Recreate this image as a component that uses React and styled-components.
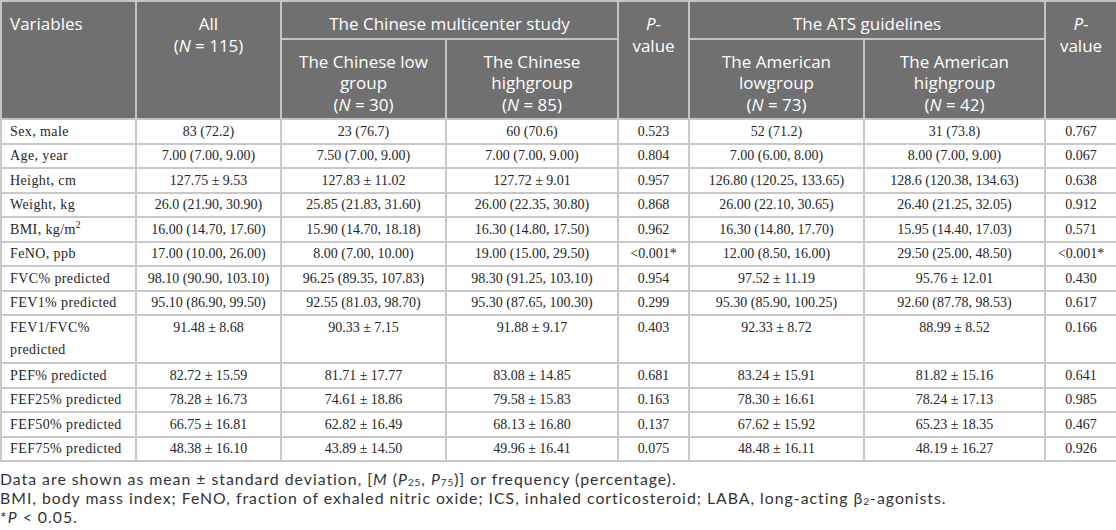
import React from "react";
import styled, { createGlobalStyle } from "styled-components";

const GlobalStyle = createGlobalStyle`
  html, body {
    margin: 0;
    padding: 0;
    background: #ffffff;
  }
`;

const Page = styled.div`
  width: 1116px;
`;

const Table = styled.table`
  width: 1116px;
  border-collapse: collapse;
  table-layout: fixed;
  border: 2px solid #c8c8c8;
`;

const HeadCell = styled.th`
  background: #707070;
  color: #ffffff;
  font-family: "Open Sans", "Noto Sans", sans-serif;
  font-weight: 400;
  font-size: 17px;
  line-height: 21.5px;
  text-align: ${p => (p.left ? "left" : "center")};
  vertical-align: top;
  padding: 11px 8px 3px;
  border: 2px solid #c4c4c4;
`;

const Cell = styled.td`
  font-family: "Liberation Serif", "DejaVu Serif", serif;
  font-size: 14px;
  line-height: 21.5px;
  color: #262626;
  text-align: ${p => (p.left ? "left" : "center")};
  vertical-align: top;
  padding: ${p => (p.tall ? "1px 8px 2px" : "0.5px 8px")};
  border: 2px solid #c8c8c8;
  white-space: ${p => (p.left ? "normal" : "nowrap")};
  letter-spacing: ${p => (p.left ? "0.4px" : "0")};
`;

const Notes = styled.div`
  margin-top: 7px;
  font-family: Lato, "Open Sans", sans-serif;
  font-size: 15.8px;
  letter-spacing: 1px;
  line-height: 19px;
  color: #333333;
`;

const NoteLine = styled.div`
  white-space: nowrap;
`;

const I = styled.i`
  font-style: italic;
`;

const Sub = styled.sub`
  font-size: 0.62em;
  line-height: 0;
  vertical-align: -0.12em;
`;

const Sup = styled.sup`
  font-size: 0.7em;
  line-height: 0;
`;

const widths = [135, 145, 165, 172, 71, 175, 181, 72];

const rows = [
  ["Sex, male", "83 (72.2)", "23 (76.7)", "60 (70.6)", "0.523", "52 (71.2)", "31 (73.8)", "0.767"],
  ["Age, year", "7.00 (7.00, 9.00)", "7.50 (7.00, 9.00)", "7.00 (7.00, 9.00)", "0.804", "7.00 (6.00, 8.00)", "8.00 (7.00, 9.00)", "0.067"],
  ["Height, cm", "127.75 ± 9.53", "127.83 ± 11.02", "127.72 ± 9.01", "0.957", "126.80 (120.25, 133.65)", "128.6 (120.38, 134.63)", "0.638"],
  ["Weight, kg", "26.0 (21.90, 30.90)", "25.85 (21.83, 31.60)", "26.00 (22.35, 30.80)", "0.868", "26.00 (22.10, 30.65)", "26.40 (21.25, 32.05)", "0.912"],
  [<>BMI, kg/m<Sup>2</Sup></>, "16.00 (14.70, 17.60)", "15.90 (14.70, 18.18)", "16.30 (14.80, 17.50)", "0.962", "16.30 (14.80, 17.70)", "15.95 (14.40, 17.03)", "0.571"],
  ["FeNO, ppb", "17.00 (10.00, 26.00)", "8.00 (7.00, 10.00)", "19.00 (15.00, 29.50)", "<0.001*", "12.00 (8.50, 16.00)", "29.50 (25.00, 48.50)", "<0.001*"],
  ["FVC% predicted", "98.10 (90.90, 103.10)", "96.25 (89.35, 107.83)", "98.30 (91.25, 103.10)", "0.954", "97.52 ± 11.19", "95.76 ± 12.01", "0.430"],
  ["FEV1% predicted", "95.10 (86.90, 99.50)", "92.55 (81.03, 98.70)", "95.30 (87.65, 100.30)", "0.299", "95.30 (85.90, 100.25)", "92.60 (87.78, 98.53)", "0.617"],
  [<>FEV1/FVC%<br />predicted</>, "91.48 ± 8.68", "90.33 ± 7.15", "91.88 ± 9.17", "0.403", "92.33 ± 8.72", "88.99 ± 8.52", "0.166"],
  ["PEF% predicted", "82.72 ± 15.59", "81.71 ± 17.77", "83.08 ± 14.85", "0.681", "83.24 ± 15.91", "81.82 ± 15.16", "0.641"],
  ["FEF25% predicted", "78.28 ± 16.73", "74.61 ± 18.86", "79.58 ± 15.83", "0.163", "78.30 ± 16.61", "78.24 ± 17.13", "0.985"],
  ["FEF50% predicted", "66.75 ± 16.81", "62.82 ± 16.49", "68.13 ± 16.80", "0.137", "67.62 ± 15.92", "65.23 ± 18.35", "0.467"],
  ["FEF75% predicted", "48.38 ± 16.10", "43.89 ± 14.50", "49.96 ± 16.41", "0.075", "48.48 ± 16.11", "48.19 ± 16.27", "0.926"],
];

const PValue = () => (
  <>
    <I>P</I>-<br />value
  </>
);

const GroupN = ({ n }) => (
  <>
    (<I>N</I> = {n})
  </>
);

export default function App() {
  return (
    <Page>
      <GlobalStyle />
      <Table>
        <colgroup>
          {widths.map((w, i) => (
            <col key={i} style={{ width: w }} />
          ))}
        </colgroup>
        <thead>
          <tr>
            <HeadCell left rowSpan={2}>Variables</HeadCell>
            <HeadCell rowSpan={2}>
              All<br />
              <GroupN n={115} />
            </HeadCell>
            <HeadCell colSpan={2}>The Chinese multicenter study</HeadCell>
            <HeadCell rowSpan={2}><PValue /></HeadCell>
            <HeadCell colSpan={2}>The ATS guidelines</HeadCell>
            <HeadCell rowSpan={2}><PValue /></HeadCell>
          </tr>
          <tr>
            <HeadCell>The Chinese low<br />group<br /><GroupN n={30} /></HeadCell>
            <HeadCell>The Chinese<br />highgroup<br /><GroupN n={85} /></HeadCell>
            <HeadCell>The American<br />lowgroup<br /><GroupN n={73} /></HeadCell>
            <HeadCell>The American<br />highgroup<br /><GroupN n={42} /></HeadCell>
          </tr>
        </thead>
        <tbody>
          {rows.map((r, i) => (
            <tr key={i}>
              {r.map((c, j) => (
                <Cell key={j} left={j === 0} tall={i === 8}>
                  {c}
                </Cell>
              ))}
            </tr>
          ))}
        </tbody>
      </Table>
      <Notes>
        <NoteLine>
          Data are shown as mean ± standard deviation, [<I>M</I> (<I>P</I><Sub>25</Sub>,{" "}
          <I>P</I><Sub>75</Sub>)] or frequency (percentage).
        </NoteLine>
        <NoteLine>
          BMI, body mass index; FeNO, fraction of exhaled nitric oxide; ICS,
          inhaled corticosteroid; LABA, long-acting β<Sub>2</Sub>-agonists.
        </NoteLine>
        <NoteLine>
          *<I>P</I> &lt; 0.05.
        </NoteLine>
      </Notes>
    </Page>
  );
}
